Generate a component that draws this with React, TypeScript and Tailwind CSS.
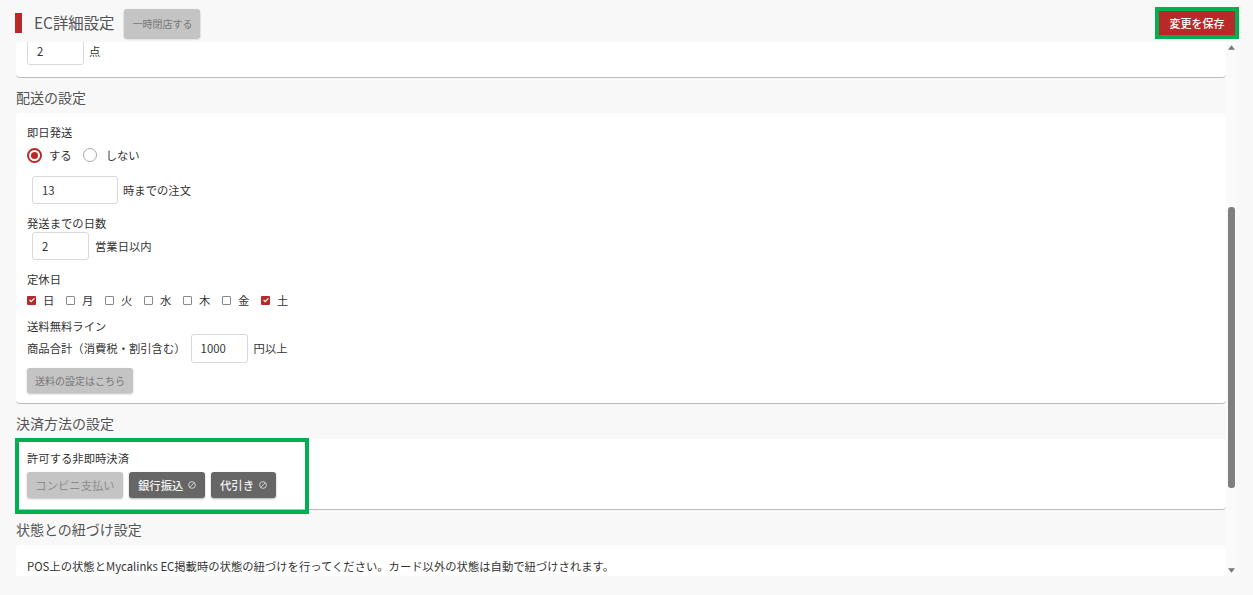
function SectionTitle({ children }: { children: string }) {
  return <h2 className="h-[35px] pt-[8px] text-[14px] leading-[22px] text-[#555]">{children}</h2>;
}

function NumInput({ value, className }: { value: string; className: string }) {
  return (
    <div className={`flex items-center rounded-[3px] border border-[#d9d9d9] bg-white pl-[9px] text-[11.33px] text-[#333] ${className}`}>
      {value}
    </div>
  );
}

function Day({ label, checked }: { label: string; checked?: boolean }) {
  return (
    <div className="flex w-[39px] items-center">
      {checked ? (
        <span className="flex size-[9px] items-center justify-center rounded-[1px] bg-[#b82a2a]">
          <svg viewBox="0 0 10 10" className="size-[8px]" fill="none" stroke="#fff" strokeWidth="1.6">
            <path d="M2 5l2 2 4-4" />
          </svg>
        </span>
      ) : (
        <span className="size-[9px] rounded-[1px] border border-[#8a8a8a]" />
      )}
      <span className="ml-[7px] leading-[18px] text-[#333]">{label}</span>
    </div>
  );
}

function PayChip({ label, width }: { label: string; width: string }) {
  return (
    <div className={`flex h-[26px] items-center justify-between rounded-[3px] bg-[#666] pl-[9px] pr-[9px] text-[11.33px] font-medium text-[#f2f2f2] shadow-[0_1px_2px_rgba(0,0,0,0.3)] ${width}`}>
      {label}
      <svg viewBox="0 0 10 10" className="size-[8px]" fill="none" stroke="#ddd" strokeWidth="1.1">
        <circle cx="5" cy="5" r="4.2" />
        <path d="M2.2 7.8l5.6-5.6" />
      </svg>
    </div>
  );
}

export default function App() {
  return (
    <div
      className="relative flex h-[595px] w-[1253px] flex-col overflow-hidden bg-[#f8f8f8]"
      style={{ fontFamily: '"Noto Sans CJK JP", sans-serif' }}
    >
      <header className="flex h-[42px] shrink-0 items-center pl-[15px] pr-[18px] pt-[4px]">
        <div className="h-[20px] w-[7px] bg-[#b82a2a]" />
        <h1 className="ml-[12px] text-[15.4px] text-[#555]">EC詳細設定</h1>
        <button className="ml-[10px] h-[29px] w-[76px] rounded-[3px] bg-[#c4c4c4] text-[10px] text-[#777] shadow-[0_1px_2px_rgba(0,0,0,0.3)]">
          一時閉店する
        </button>
        <button className="ml-auto h-[24px] w-[76px] bg-[#b82a2a] text-[11px] font-medium text-white">変更を保存</button>
      </header>

      <div className="flex h-[534px] shrink-0 overflow-hidden">
        <main className="w-[1226px] shrink-0 pl-[16px] text-[11.33px]">
          <section className="h-[36px] rounded-b-[4px] border-b border-[#bbb] bg-white pl-[11px]">
            <div className="flex items-center">
              <NumInput value="2" className="-mt-[4px] h-[27px] w-[57px]" />
              <span className="ml-[5px] -mt-[4px] text-[#333]">点</span>
            </div>
          </section>

          <SectionTitle>配送の設定</SectionTitle>
          <section className="h-[291px] rounded-[4px] border-b border-[#bbb] bg-white pl-[11px] pt-[10px] text-[#333]">
            <p className="leading-[18px]">即日発送</p>
            <div className="mt-[5px] flex h-[18px] items-center">
              <span className="flex size-[15px] items-center justify-center rounded-full border-2 border-[#b82a2a]">
                <span className="size-[7px] rounded-full bg-[#b82a2a]" />
              </span>
              <span className="ml-[7px]">する</span>
              <span className="ml-[11px] size-[14px] rounded-full border border-[#aaa]" />
              <span className="ml-[9px]">しない</span>
            </div>
            <div className="ml-[5px] mt-[12px] flex items-center">
              <NumInput value="13" className="h-[28px] w-[86px]" />
              <span className="ml-[5px]">時までの注文</span>
            </div>
            <p className="mt-[10px] leading-[18px]">発送までの日数</p>
            <div className="ml-[5px] flex items-center">
              <NumInput value="2" className="h-[28px] w-[57px]" />
              <span className="ml-[6px]">営業日以内</span>
            </div>
            <p className="mt-[10px] leading-[18px]">定休日</p>
            <div className="mt-[3px] flex">
              <Day label="日" checked />
              <Day label="月" />
              <Day label="火" />
              <Day label="水" />
              <Day label="木" />
              <Day label="金" />
              <Day label="土" checked />
            </div>
            <p className="mt-[8px] leading-[18px]">送料無料ライン</p>
            <div className="-mt-[1px] flex items-center">
              <span>商品合計（消費税・割引含む）</span>
              <NumInput value="1000" className="ml-[5px] h-[29px] w-[57px]" />
              <span className="ml-[6px]">円以上</span>
            </div>
            <button className="mt-[5px] block h-[25px] w-[106px] rounded-[3px] bg-[#c4c4c4] text-[10px] text-[#777] shadow-[0_1px_2px_rgba(0,0,0,0.25)]">
              送料の設定はこちら
            </button>
          </section>

          <SectionTitle>決済方法の設定</SectionTitle>
          <section className="h-[71px] rounded-[4px] border-b border-[#bbb] bg-white pl-[11px] pt-[10px]">
            <p className="leading-[18px] text-[#333]">許可する非即時決済</p>
            <div className="mt-[5px] flex gap-[6px]">
              <div className="flex h-[26px] w-[96px] items-center justify-center rounded-[3px] bg-[#c4c4c4] text-[#8c8c8c] shadow-[0_1px_2px_rgba(0,0,0,0.25)]">
                コンビニ支払い
              </div>
              <PayChip label="銀行振込" width="w-[76px]" />
              <PayChip label="代引き" width="w-[65px]" />
            </div>
          </section>

          <SectionTitle>状態との紐づけ設定</SectionTitle>
          <section className="h-[60px] rounded-t-[4px] bg-white pl-[11px] pt-[12px]">
            <p className="leading-[18px] text-[#333]">
              POS上の状態とMycalinks EC掲載時の状態の紐づけを行ってください。カード以外の状態は自動で紐づけされます。
            </p>
          </section>
        </main>

        <div className="flex w-[10px] shrink-0 flex-col items-center bg-[#fafafa]">
          <svg viewBox="0 0 8 5" className="mt-[3px] h-[5px] w-[7px] fill-[#777]">
            <path d="M4 0l4 5H0z" />
          </svg>
          <div className="mt-[157px] h-[281px] w-[7px] rounded-[3px] bg-[#7f7f7f]" />
          <svg viewBox="0 0 8 5" className="mt-[80px] h-[5px] w-[7px] fill-[#777]">
            <path d="M0 0h8L4 5z" />
          </svg>
        </div>
      </div>

      {/* annotation frames */}
      <div className="pointer-events-none absolute left-[15px] top-[438px] h-[76px] w-[294px] border-4 border-[#00b050]" />
      <div className="pointer-events-none absolute left-[1155px] top-[7px] h-[32px] w-[84px] border-4 border-[#00b050]" />
    </div>
  );
}
